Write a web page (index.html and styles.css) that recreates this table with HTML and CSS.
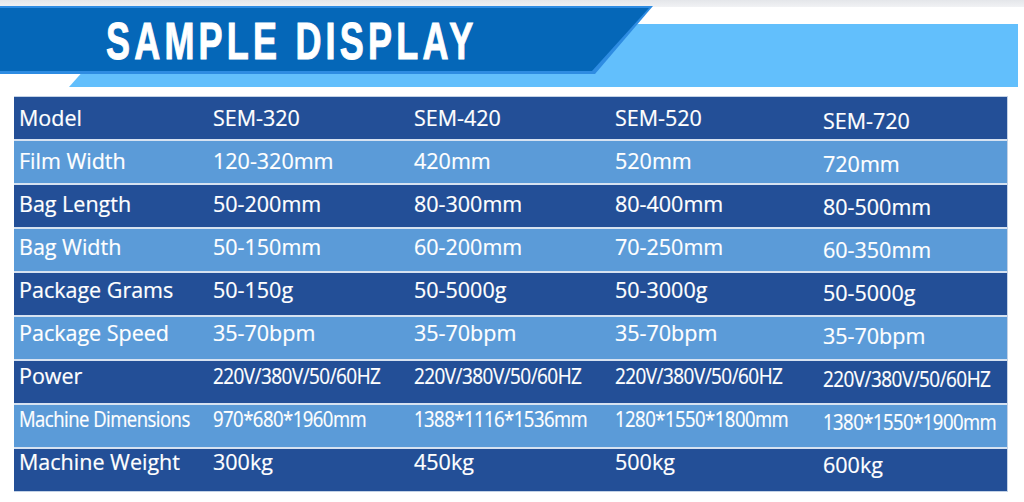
FILE: index.html
```html
<!DOCTYPE html>
<html lang="en">
<head>
<meta charset="utf-8">
<title>Sample Display</title>
<link rel="stylesheet" href="styles.css">
</head>
<body>
<header class="hero">
  <svg class="hero-art" width="1024" height="97" viewBox="0 0 1024 97" aria-hidden="true">
    <defs>
      <linearGradient id="topfade" x1="0" y1="0" x2="0" y2="1">
        <stop offset="0" stop-color="#e4e6ea"/>
        <stop offset="1" stop-color="#f1f2f4"/>
      </linearGradient>
    </defs>
    <rect x="0" y="0" width="1024" height="7" fill="url(#topfade)"/>
    <polygon points="69,87 125,24 1018,24 1018,87" fill="#62bffc"/>
    <polygon points="0,6 653,6 595,74 0,74" fill="#2e8ce2"/>
    <polygon points="0,8 649,8 592,71 0,71" fill="#0567b8"/>
  </svg>
  <h1 class="hero-title">SAMPLE DISPLAY</h1>
</header>

<main class="spec">
  <div class="row dark">
    <div class="cell">Model</div><div class="cell">SEM-320</div><div class="cell">SEM-420</div><div class="cell">SEM-520</div><div class="cell last">SEM-720</div>
  </div>
  <div class="row light">
    <div class="cell">Film Width</div><div class="cell">120-320mm</div><div class="cell">420mm</div><div class="cell">520mm</div><div class="cell last">720mm</div>
  </div>
  <div class="row dark">
    <div class="cell">Bag Length</div><div class="cell">50-200mm</div><div class="cell">80-300mm</div><div class="cell">80-400mm</div><div class="cell last">80-500mm</div>
  </div>
  <div class="row light">
    <div class="cell">Bag Width</div><div class="cell">50-150mm</div><div class="cell">60-200mm</div><div class="cell">70-250mm</div><div class="cell last">60-350mm</div>
  </div>
  <div class="row dark">
    <div class="cell">Package Grams</div><div class="cell">50-150g</div><div class="cell">50-5000g</div><div class="cell">50-3000g</div><div class="cell last">50-5000g</div>
  </div>
  <div class="row light">
    <div class="cell">Package Speed</div><div class="cell">35-70bpm</div><div class="cell">35-70bpm</div><div class="cell">35-70bpm</div><div class="cell last">35-70bpm</div>
  </div>
  <div class="row dark">
    <div class="cell">Power</div><div class="cell"><span class="cond power">220V/380V/50/60HZ</span></div><div class="cell"><span class="cond power">220V/380V/50/60HZ</span></div><div class="cell"><span class="cond power">220V/380V/50/60HZ</span></div><div class="cell last"><span class="cond power">220V/380V/50/60HZ</span></div>
  </div>
  <div class="row light">
    <div class="cell"><span class="cond dims">Machine Dimensions</span></div><div class="cell"><span class="cond dims">970*680*1960mm</span></div><div class="cell"><span class="cond dims">1388*1116*1536mm</span></div><div class="cell"><span class="cond dims">1280*1550*1800mm</span></div><div class="cell last"><span class="cond dims">1380*1550*1900mm</span></div>
  </div>
  <div class="row dark">
    <div class="cell">Machine Weight</div><div class="cell">300kg</div><div class="cell">450kg</div><div class="cell">500kg</div><div class="cell last">600kg</div>
  </div>
</main>
</body>
</html>
```

FILE: styles.css
```css
html, body {
  margin: 0;
  padding: 0;
  background: #ffffff;
}

body {
  width: 1024px;
  height: 502px;
  overflow: hidden;
  font-family: "Open Sans", "Liberation Sans", sans-serif;
}

.hero {
  display: grid;
  height: 96px;
}

.hero-art,
.hero-title {
  grid-area: 1 / 1;
}

.hero-art {
  display: block;
}

.hero-title {
  margin: 0;
  padding: 11px 0 0 106px;
  font-family: "Liberation Sans", Arial, sans-serif;
  font-weight: 700;
  font-size: 36px;
  line-height: 36px;
  letter-spacing: 4.2px;
  color: #ffffff;
  -webkit-text-stroke: 0.7px #ffffff;
  transform: scaleY(1.43);
  transform-origin: left top;
  align-self: start;
  height: 36px;
}

.spec {
  margin-left: 14px;
  width: 994px;
  display: flex;
  flex-direction: column;
  gap: 2px;
  background: #d6e2f1;
  border: 1px solid #c3d2e6;
  border-left: 0;
  box-sizing: border-box;
}

.row {
  display: grid;
  grid-template-columns: 194px 201px 201px 208px 1fr;
  height: 42px;
  padding-left: 5px;
  box-sizing: border-box;
  align-items: start;
}

.row.dark {
  background: #234f97;
}

.row.light {
  background: #5b9bd8;
}

.cell {
  color: #ffffff;
  font-size: 21.5px;
  line-height: 24px;
  white-space: nowrap;
  -webkit-text-stroke: 0.2px #ffffff;
}

.cond {
  display: inline-block;
  transform-origin: left center;
}

.cond.power {
  letter-spacing: -0.6px;
  transform: scaleX(0.88);
}

.cond.dims {
  letter-spacing: -0.6px;
  transform: scaleX(0.86);
}

.cell.last {
  padding-top: 3px;
}

.row:nth-child(1) { padding-top: 9px; }
.row:nth-child(2) { padding-top: 8px; }
.row:nth-child(3) { padding-top: 7px; }
.row:nth-child(4) { padding-top: 6px; }
.row:nth-child(5) { padding-top: 5px; }
.row:nth-child(6) { padding-top: 4px; }
.row:nth-child(7) { padding-top: 3px; }
.row:nth-child(8) { padding-top: 2px; }
.row:nth-child(9) { padding-top: 1px; }
```
